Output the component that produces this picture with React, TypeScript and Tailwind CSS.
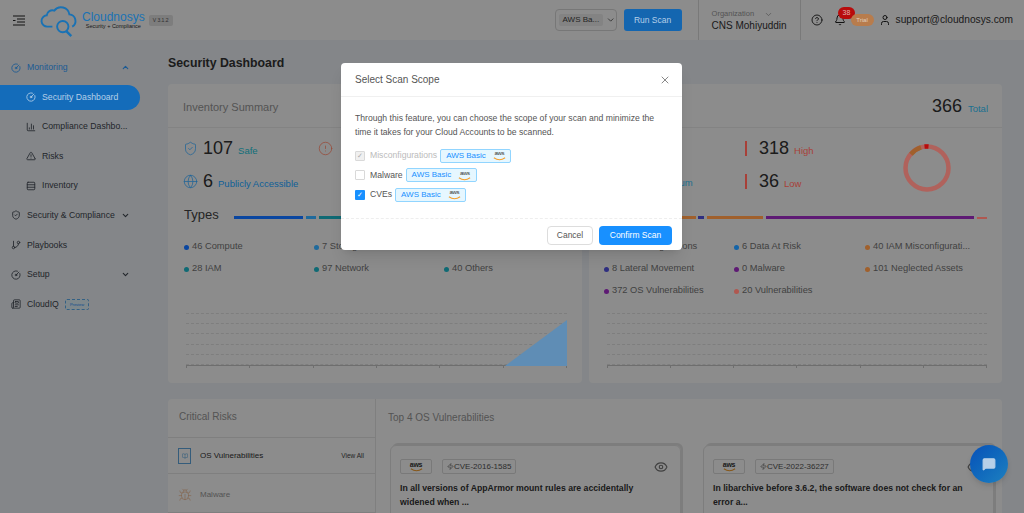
import {
  BookOpen,
  Bug,
  ChartColumn,
  ChevronDown,
  ChevronUp,
  CircleAlert,
  CircleGauge,
  CircleHelp,
  Eye,
  Bell,
  GitBranch,
  Globe,
  Newspaper,
  ShieldCheck,
  TriangleAlert,
  User,
  X,
  Zap,
  MessageSquare,
  Rows3,
} from "lucide-react";

function AwsLogo({ small }: { small?: boolean }) {
  return (
    <span className="relative inline-flex h-[11px] w-[15px] flex-col items-center leading-none">
      <span className={`tracking-[-0.3px] text-[#333] ${small ? "text-[6px]" : "text-[7px] font-bold"}`}>aws</span>
      <svg viewBox="0 0 16 5" className="absolute bottom-0 left-0 h-[4px] w-[15px]">
        <path d="M1 1 Q8 6 15 1" fill="none" stroke="#f59e2c" strokeWidth="1.4" />
      </svg>
    </span>
  );
}

function ScopeTag() {
  return (
    <span className="ml-[3px] inline-flex h-[14px] w-[71px] items-center gap-[6px] rounded-[2px] border border-[#91d5ff] bg-[#e6f7ff] pl-[5px] text-[8px] text-[#1890ff]">
      AWS Basic
      <AwsLogo small />
    </span>
  );
}

function SideItem({
  icon,
  label,
  sub,
  active,
  open,
  chevron,
  extra,
  color,
}: {
  icon: React.ReactNode;
  label: string;
  sub?: boolean;
  active?: boolean;
  open?: boolean;
  chevron?: boolean;
  extra?: React.ReactNode;
  color?: string;
}) {
  return (
    <div
      className={`flex h-[25px] items-center gap-[6px] text-[8.7px] ${sub ? "pl-[26px]" : "pl-[11px]"} ${
        active ? "relative z-20 w-[140px] rounded-r-full bg-[#146cba] text-[#b4cfe8]" : color ?? "text-[#3f4650]"
      }`}
    >
      <span className="flex w-[10px] justify-center">{icon}</span>
      <span className="whitespace-nowrap">{label}</span>
      {extra}
      {chevron && (
        <span className="ml-auto mr-[30px]">
          {open ? <ChevronUp size={9} strokeWidth={3} /> : <ChevronDown size={9} strokeWidth={3} />}
        </span>
      )}
    </div>
  );
}

function Sidebar() {
  return (
    <aside className="flex w-[160px] shrink-0 flex-col gap-[4.6px] pt-[15px]">
      <SideItem icon={<CircleGauge size={10} />} label="Monitoring" chevron open color="relative z-20 text-[#1a5a94]" />
      <SideItem icon={<CircleGauge size={10} />} label="Security Dashboard" sub active />
      <SideItem icon={<ChartColumn size={10} />} label="Compliance Dashbo..." sub />
      <SideItem icon={<TriangleAlert size={10} />} label="Risks" sub />
      <SideItem icon={<Rows3 size={10} />} label="Inventory" sub />
      <SideItem icon={<ShieldCheck size={10} />} label="Security & Compliance" chevron />
      <SideItem icon={<GitBranch size={10} />} label="Playbooks" />
      <SideItem icon={<CircleGauge size={10} />} label="Setup" chevron />
      <SideItem
        icon={<Newspaper size={10} />}
        label="CloudIQ"
        extra={
          <span className="rounded-[2px] border border-dashed border-[#60b0f0] bg-[#e6f7ff] px-[4px] text-[4px] leading-[9px] text-[#1890ff]">
            Preview
          </span>
        }
      />
    </aside>
  );
}

function Header() {
  return (
    <header className="flex h-[40px] shrink-0 items-center bg-white">
      <svg viewBox="0 0 12 11" className="ml-[13px] h-[11px] w-[12px]" fill="none" stroke="#222" strokeWidth="1">
        <path d="M0 1h12M4 4h8M0 5.5h2.5M4 7h8M0 10h12" />
      </svg>
      <svg viewBox="0 0 40 36" className="relative z-20 ml-[15px] h-[34px] w-[38px]" fill="none" stroke="#1a72b4" strokeWidth="2">
        <path d="M13 25H8a6 6 0 0 1-1-12 6 6 0 0 1 8-5 9 9 0 0 1 16 4 7 7 0 0 1 3 13" />
        <circle cx="24" cy="25" r="6" />
        <path d="M28 30l5 5" strokeWidth="2.5" />
      </svg>
      <div className="ml-[4px] flex flex-col items-center leading-none">
        <span className="relative z-20 text-[12px] font-medium text-[#1a72b4]">Cloudnosys</span>
        <span className="mt-[1px] text-[5.5px] text-[#333]">Security + Compliance</span>
      </div>
      <span className="ml-[4px] rounded-[2px] bg-[#e4e4e4] px-[4px] text-[5px] leading-[11px] text-[#555]">V 3.1.2</span>
      <div className="ml-[382px] flex h-[22px] w-[62px] shrink-0 items-center rounded-[4px] border border-[#d9d9d9] pl-[3px]">
        <span className="whitespace-nowrap rounded-[2px] bg-[#eeeeee] px-[4px] text-[8px] leading-[12px] text-[#444]">AWS Ba...</span>
        <ChevronDown size={10} className="ml-[3px] text-[#444]" />
      </div>
      <button className="relative z-20 ml-[7px] h-[22px] w-[58px] rounded-[3px] bg-[#1466b0] text-[8.5px] text-[#b4cfe8]">Run Scan</button>
      <div className="ml-[16px] flex h-[40px] w-[103px] flex-col justify-center border-x border-[#dddddd] pl-[13px]">
        <span className="flex items-center gap-[10px] text-[7.5px] text-[#999]">
          Organization <ChevronDown size={9} />
        </span>
        <span className="text-[10px] leading-[12px] text-[#333]">CNS Mohiyuddin</span>
      </div>
      <CircleHelp size={12} className="ml-[10px] text-[#333]" />
      <div className="relative ml-[11px]">
        <Bell size={12} className="text-[#222]" />
        <span className="absolute -top-[7px] left-[4px] z-20 h-[12px] rounded-full bg-[#b80c0c] px-[5px] text-[7px] leading-[12px] text-[#e0b0b0]">
          38
        </span>
      </div>
      <span className="relative z-20 ml-[5px] h-[12px] w-[23px] rounded-full bg-[#b87c4c] text-center text-[6px] leading-[12px] text-[#e0d0c0]">
        Trial
      </span>
      <User size={12} className="ml-[5px] text-[#222]" />
      <span className="ml-[5px] whitespace-nowrap text-[10.2px] text-[#333]">support@cloudnosys.com</span>
    </header>
  );
}

function Dot({ className }: { className: string }) {
  return <span className={`relative z-20 h-[5px] w-[5px] shrink-0 rounded-full ${className}`} />;
}

function Legend({ color, text }: { color: string; text: string }) {
  return (
    <div className="flex h-[22px] items-center gap-[3px] whitespace-nowrap text-[9.3px] text-[#777]">
      <Dot className={color} />
      {text}
    </div>
  );
}

function ChartLines({ area }: { area?: boolean }) {
  return (
    <div className="relative ml-[3px]">
      <div className="flex h-[53px] flex-col justify-between border-b border-[#c8c8c8]">
        {[0, 1, 2, 3, 4, 5].map((i) => (
          <div key={i} className="border-t border-dashed border-[#e6e6e6]" />
        ))}
      </div>
      <div className="flex justify-between">
        {[0, 1, 2, 3, 4, 5, 6].map((i) => (
          <span key={i} className="h-[2px] w-px bg-[#c8c8c8]" />
        ))}
      </div>
      {area && (
        <svg viewBox="0 0 62 46" preserveAspectRatio="none" className="absolute bottom-[2px] right-0 z-20 h-[46px] w-[62px]">
          <path d="M0 46 L62 0 V46 Z" fill="#5f8db5" />
        </svg>
      )}
    </div>
  );
}

function Stat({ value, label, color }: { value: string; label: string; color: string }) {
  return (
    <div className="flex items-baseline gap-[5px]">
      <span className="text-[18px] leading-[24px] text-[#333]">{value}</span>
      <span className={`relative z-20 text-[9.5px] ${color}`}>{label}</span>
    </div>
  );
}

function InventoryCard() {
  return (
    <section className="flex h-[299px] w-[414px] flex-col rounded-[4px] bg-white">
      <div className="flex h-[44px] shrink-0 items-center border-b border-[#eeeeee] px-[15px] pt-[3px] text-[11px] text-[#999]">
        Inventory Summary
      </div>
      <div className="flex-1 px-[15px]">
        <div className="mt-[8px] flex h-[24px] items-center justify-between pr-[8px]">
          <div className="flex items-center gap-[5px]">
            <ShieldCheck size={15} strokeWidth={1.2} className="relative z-20 text-[#1f6498]" />
            <Stat value="107" label="Safe" color="text-[#0f6f7a]" />
          </div>
          <div className="mr-[226px]">
            <CircleAlert size={15} strokeWidth={1.2} className="relative z-20 text-[#984a38]" />
          </div>
        </div>
        <div className="mt-[9px] flex h-[24px] items-center gap-[5px]">
          <Globe size={15} strokeWidth={1.2} className="relative z-20 text-[#1f6498]" />
          <Stat value="6" label="Publicly Accessible" color="text-[#0f5f98]" />
        </div>
        <div className="mt-[10px] flex h-[24px] items-center gap-[15px] pl-[1px]">
          <span className="text-[13px] text-[#444]">Types</span>
          <div className="relative z-20 mt-[4px] flex h-[3px] flex-1 gap-[3px]">
            <div className="w-[69px] bg-[#0a46a0]" />
            <div className="w-[10px] bg-[#1f6a9c]" />
            <div className="w-[30px] bg-[#0f6a74]" />
            <div className="flex-1 bg-[#1f5498]" />
          </div>
        </div>
        <div className="mt-[9px] grid grid-cols-[130px_130px_1fr] pl-[1px]">
          <Legend color="bg-[#0a46a0]" text="46 Compute" />
          <Legend color="bg-[#1f6a9c]" text="7 Storage" />
          <Legend color="bg-[#555]" text="42 Databases" />
          <Legend color="bg-[#0f6a74]" text="28 IAM" />
          <Legend color="bg-[#0f6a74]" text="97 Network" />
          <Legend color="bg-[#0f6a74]" text="40 Others" />
        </div>
        <div className="mt-[33px]">
          <ChartLines area />
        </div>
      </div>
    </section>
  );
}

function RiskCard() {
  return (
    <section className="flex h-[299px] w-[413px] flex-col rounded-[4px] bg-white">
      <div className="flex h-[44px] shrink-0 items-center justify-end gap-[6px] border-b border-[#eeeeee] pr-[14px] pt-[2px]">
        <span className="text-[18px] text-[#333]">366</span>
        <span className="relative z-20 mt-[6px] text-[9.5px] text-[#1a7090]">Total</span>
      </div>
      <div className="relative flex-1 px-[15px]">
        <div className="flex h-[76px] pl-[55px] pt-[8px]">
          <div className="relative z-20 flex w-[86px] flex-col justify-end pb-[14px] text-[9.5px] text-[#1a7090]">Medium</div>
          <div className="flex flex-col gap-[9px]">
            <div className="flex items-center gap-[12px]">
              <span className="relative z-20 h-[15px] w-[2px] bg-[#a84038]" />
              <Stat value="318" label="High" color="text-[#a84038]" />
            </div>
            <div className="flex items-center gap-[12px]">
              <span className="relative z-20 h-[15px] w-[2px] bg-[#a84038]" />
              <Stat value="36" label="Low" color="text-[#a84038]" />
            </div>
          </div>
        </div>
        <svg viewBox="0 0 48 48" className="absolute right-[51px] top-[16px] z-20 h-[48px] w-[48px]">
          <circle cx="24" cy="24" r="21.5" fill="none" stroke="#b0625c" strokeWidth="4.5" />
          <path d="M8 10.2 A21.5 21.5 0 0 1 18 3.4" fill="none" stroke="#a0602c" strokeWidth="4.5" />
          <path d="M21.5 2.6 A21.5 21.5 0 0 1 25.5 2.6" fill="none" stroke="#b80c0c" strokeWidth="4.5" />
        </svg>
        <div className="relative z-20 mt-[12px] flex h-[3px] items-center gap-[2px] pl-[73px]">
          <div className="h-[3px] w-[19px] bg-[#a0602c]" />
          <div className="h-[3px] w-[6px] bg-[#2e2e80]" />
          <div className="ml-[1px] h-[3px] w-[57px] bg-[#a0602c]" />
          <div className="ml-[1px] h-[3px] w-[211px] bg-[#5e1a74]" />
          <div className="ml-[1px] h-[2px] w-[10px] bg-[#b05850]" />
        </div>
        <div className="mt-[17px] grid grid-cols-[130px_131px_1fr]">
          <Legend color="bg-[#0a46a0]" text="91 Misconfigurations" />
          <Legend color="bg-[#1464a8]" text="6 Data At Risk" />
          <Legend color="bg-[#a0602c]" text="40 IAM Misconfigurati..." />
          <Legend color="bg-[#2e2e80]" text="8 Lateral Movement" />
          <Legend color="bg-[#5e1a74]" text="0 Malware" />
          <Legend color="bg-[#a0602c]" text="101 Neglected Assets" />
          <Legend color="bg-[#5e1a74]" text="372 OS Vulnerabilities" />
          <Legend color="bg-[#b05850]" text="20 Vulnerabilities" />
        </div>
        <div className="mt-[11px]">
          <ChartLines />
        </div>
      </div>
    </section>
  );
}

function VulnCard({ cve, text }: { cve: string; text: string }) {
  return (
    <div className="relative h-[80px] w-[291px] rounded-t-[6px] border border-[#e4e4e4] pl-[9px] pr-[25px] pt-[13px] shadow-[2px_-2px_0_#e4e4e4]">
      <div className="flex items-center gap-[10px]">
        <span className="flex h-[15px] w-[32px] items-center justify-center rounded-[2px] border border-[#dddddd]">
          <AwsLogo />
        </span>
        <span className="flex h-[15px] items-center rounded-[2px] border border-[#dddddd] px-[4px] text-[8px] text-[#555]">
          <Zap size={7} />
          {cve}
        </span>
      </div>
      <Eye size={14} className="absolute right-[12px] top-[14px] text-[#777]" />
      <p className="mt-[8px] text-[8.7px] font-bold leading-[13.5px] text-[#333]">{text}</p>
    </div>
  );
}

function BottomCard() {
  return (
    <section className="mt-[16px] flex h-[120px] w-[834px] rounded-[4px] bg-white">
      <div className="flex w-[208px] shrink-0 flex-col border-r border-[#e8e8e8]">
        <div className="flex h-[38px] items-center px-[11px] pb-[4px] text-[10px] text-[#999]">Critical Risks</div>
        <div className="flex h-[37px] items-center border-y border-[#e8e8e8] pl-[10px] pr-[11px]">
          <span className="flex h-[16px] w-[13px] items-center justify-center border border-[#60a8e0] text-[#5aa8e0]">
            <BookOpen size={6} />
          </span>
          <span className="ml-[9px] text-[8px] text-[#333]">OS Vulnerabilities</span>
          <span className="ml-auto text-[6.5px] text-[#444]">View All</span>
        </div>
        <div className="flex h-[39px] items-center border-b border-[#e8e8e8] pl-[10px] pt-[4px]">
          <Bug size={14} strokeWidth={1} className="text-[#f0b080]" />
          <span className="ml-[8px] text-[8px] text-[#999]">Malware</span>
        </div>
      </div>
      <div className="flex-1">
        <div className="flex h-[36px] items-center pl-[12px] text-[10px] text-[#999]">Top 4 OS Vulnerabilities</div>
        <div className="mt-[10px] flex gap-[22px] pl-[14px]">
          <VulnCard cve="CVE-2016-1585" text="In all versions of AppArmor mount rules are accidentally widened when ..." />
          <VulnCard cve="CVE-2022-36227" text="In libarchive before 3.6.2, the software does not check for an error a..." />
        </div>
      </div>
    </section>
  );
}

function ScanModal() {
  return (
    <div className="absolute left-[341px] top-[63px] z-30 w-[341px] rounded-[4px] bg-white shadow-lg">
      <div className="flex h-[34px] items-center justify-between border-b border-[#f0f0f0] pl-[14px] pr-[11px] text-[10px] text-[#555]">
        Select Scan Scope
        <X size={12} className="text-[#888]" />
      </div>
      <div className="h-[121px] px-[14px] pt-[14px] text-[8.65px] text-[#555]">
        <p className="leading-[14px]">
          Through this feature, you can choose the scope of your scan and minimize the time it takes for your Cloud
          Accounts to be scanned.
        </p>
        <div className="mt-[7px] flex h-[19.5px] items-center">
          <span className="flex h-[10px] w-[10px] items-center justify-center rounded-[1px] border border-[#d9d9d9] bg-[#f0f0f0] text-[7px] leading-none text-[#aaa]">
            ✓
          </span>
          <span className="ml-[5px] text-[#bbbbbb]">Misconfigurations</span>
          <ScopeTag />
        </div>
        <div className="flex h-[19.5px] items-center">
          <span className="h-[10px] w-[10px] rounded-[1px] border border-[#d9d9d9] bg-white" />
          <span className="ml-[5px]">Malware</span>
          <ScopeTag />
        </div>
        <div className="flex h-[19.5px] items-center">
          <span className="flex h-[10px] w-[10px] items-center justify-center rounded-[1px] bg-[#1890ff] text-[7px] leading-none text-white">
            ✓
          </span>
          <span className="ml-[5px]">CVEs</span>
          <ScopeTag />
        </div>
      </div>
      <div className="flex h-[32px] items-center justify-end gap-[6px] border-t border-dashed border-[#eeeeee] pr-[10px] pt-[1px]">
        <button className="h-[19px] w-[46px] rounded-[4px] border border-[#dddddd] text-[8.5px] text-[#555]">Cancel</button>
        <button className="h-[19px] w-[73px] rounded-[4px] bg-[#1890ff] text-[8.5px] font-medium text-white">Confirm Scan</button>
      </div>
    </div>
  );
}

export default function App() {
  return (
    <div className="relative h-[513px] w-[1024px] overflow-hidden bg-[#f0f4f9] font-['Liberation_Sans',Arial,sans-serif]">
      <Header />
      <div className="flex">
        <Sidebar />
        <main className="flex-1 pl-[8px]">
          <h1 className="flex h-[44px] items-center pt-[2px] text-[12.3px] font-bold text-[#333]">Security Dashboard</h1>
          <div className="flex gap-[7px]">
            <InventoryCard />
            <RiskCard />
          </div>
          <BottomCard />
        </main>
      </div>
      <div className="absolute inset-0 z-10 bg-black/45" />
      <ScanModal />
      <button className="absolute left-[970px] top-[445px] z-20 flex h-[38px] w-[38px] items-center justify-center rounded-full bg-gradient-to-br from-[#0a50b8] to-[#1e80c0] text-[#b8d0e8] shadow-md">
        <MessageSquare size={14} fill="currentColor" />
      </button>
    </div>
  );
}
